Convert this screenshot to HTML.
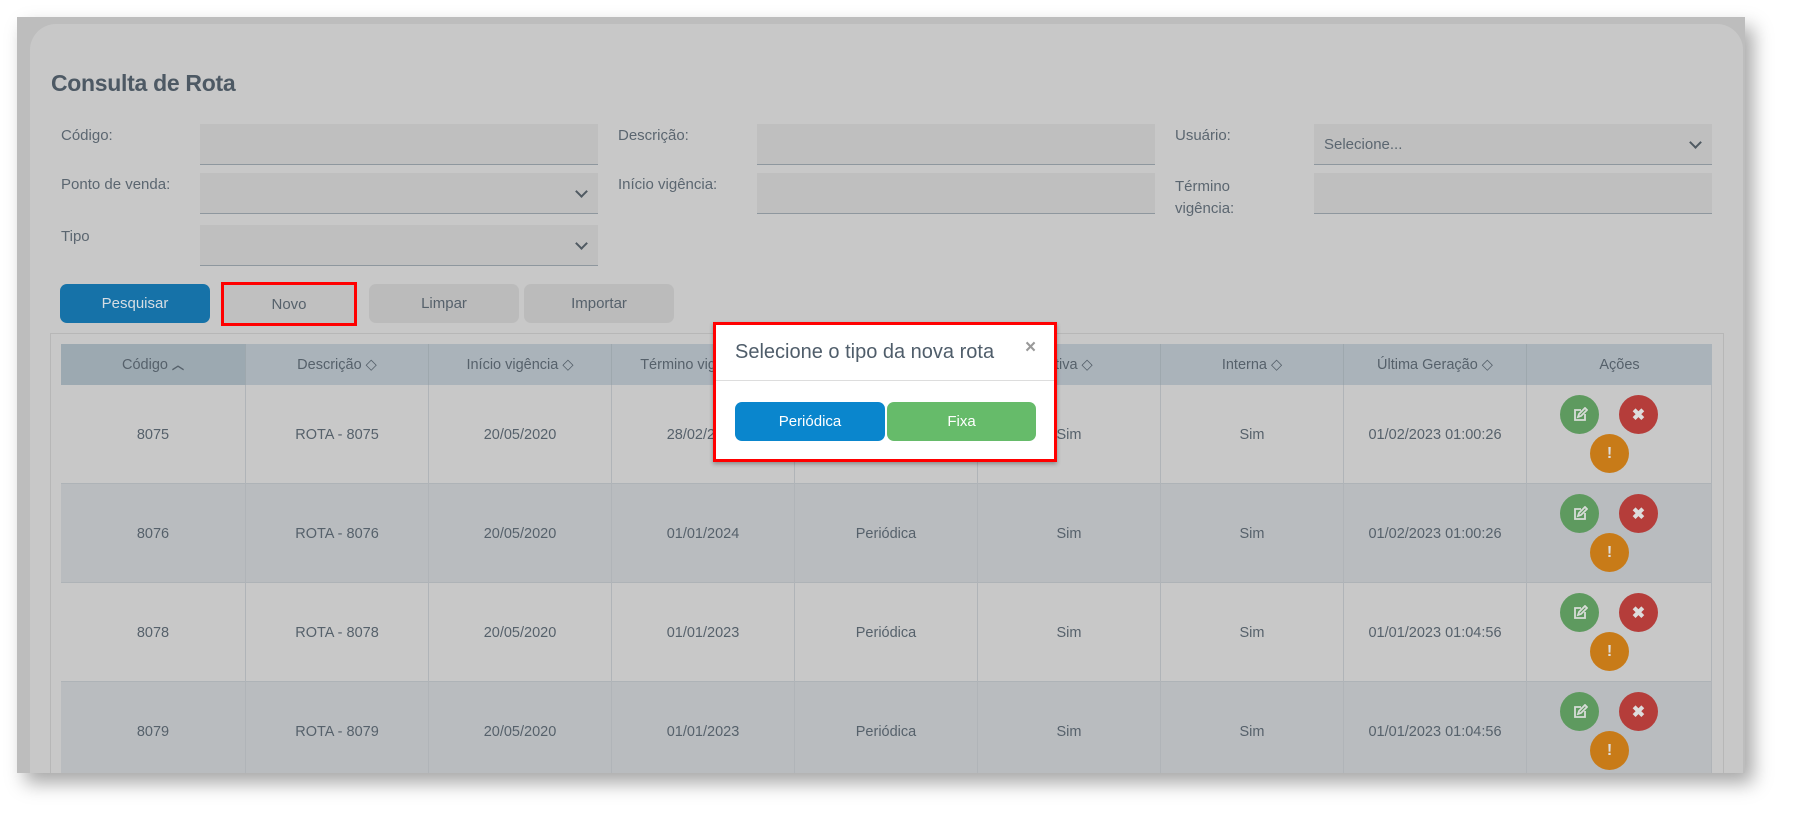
<!DOCTYPE html>
<html><head><meta charset="utf-8"><style>
*{margin:0;padding:0;box-sizing:border-box}
body{width:1800px;height:820px;background:#fff;font-family:"Liberation Sans",sans-serif;position:relative;overflow:hidden;color:#56616b}
.abs{position:absolute}
#outer{left:17px;top:17px;width:1728px;height:756px;background:#bdbdbd;box-shadow:8px 10px 18px rgba(0,0,0,.35)}
#clip{position:absolute;left:0;top:0;width:1800px;height:773px;overflow:hidden}
#card{left:30px;top:24px;width:1713px;height:760px;background:#c8c8c8;border-radius:26px 26px 0 0}
.lbl{font-size:15px;color:#5b6670}
.inp{background:#bfbfbf;border-bottom:1.5px solid #8e979e;height:41px}
.chev{position:absolute;right:12px;top:14px;width:9px;height:9px;border-right:2px solid #505a62;border-bottom:2px solid #505a62;transform:rotate(45deg)}
.btn{height:39px;border-radius:7px;font-size:15px;display:flex;align-items:center;justify-content:center;background:#bbbbbb;color:#56616b}
.th{top:344px;height:41px;background:#aab3ba;font-size:14.5px;display:flex;align-items:center;justify-content:center;border-right:1px solid #9ea8ae}
.cell{font-size:14.5px;display:flex;align-items:center;justify-content:center;border-right:1px solid #b0b4b8}
.c{position:absolute;border-radius:50%;width:39px;height:39px;display:flex;align-items:center;justify-content:center;color:#ddd;font-weight:bold;font-size:16px}
</style></head><body>
<div id="outer" class="abs"></div>
<div id="clip">
<div id="card" class="abs"></div>
<div class="abs" style="left:51px;top:70px;font-size:23px;color:#4d5964;font-weight:bold;letter-spacing:-0.3px">Consulta de Rota</div>

<div class="abs lbl" style="left:61px;top:127px">Código:</div>
<div class="abs inp" style="left:200px;top:124px;width:398px"></div>
<div class="abs lbl" style="left:61px;top:176px">Ponto de venda:</div>
<div class="abs inp" style="left:200px;top:173px;width:398px"><span class="chev"></span></div>
<div class="abs lbl" style="left:61px;top:228px">Tipo</div>
<div class="abs inp" style="left:200px;top:225px;width:398px"><span class="chev"></span></div>

<div class="abs lbl" style="left:618px;top:127px">Descrição:</div>
<div class="abs inp" style="left:757px;top:124px;width:398px"></div>
<div class="abs lbl" style="left:618px;top:176px">Início vigência:</div>
<div class="abs inp" style="left:757px;top:173px;width:398px"></div>

<div class="abs lbl" style="left:1175px;top:127px">Usuário:</div>
<div class="abs inp" style="left:1314px;top:124px;width:398px"><span class="abs lbl" style="left:10px;top:12px">Selecione...</span><span class="chev"></span></div>
<div class="abs lbl" style="left:1175px;top:176px;line-height:22px">Término<br>vigência:</div>
<div class="abs inp" style="left:1314px;top:173px;width:398px"></div>

<div class="abs btn" style="left:60px;top:284px;width:150px;background:#1672a8;color:#d6dde3">Pesquisar</div>
<div class="abs btn" style="left:221px;top:282px;width:136px;height:44px;border:3px solid #f00;border-radius:0;background:#c0c0c0">Novo</div>
<div class="abs btn" style="left:369px;top:284px;width:150px">Limpar</div>
<div class="abs btn" style="left:524px;top:284px;width:150px">Importar</div>

<div class="abs" style="left:50px;top:333px;width:1674px;height:460px;border:1px solid #b7b7b7"></div>

<div class="abs th" style="left:61px;width:185px;background:#9ca9b1">Código&nbsp;<b style="font-size:12px">︿</b></div>
<div class="abs th" style="left:246px;width:183px">Descrição ◇</div>
<div class="abs th" style="left:429px;width:183px">Início vigência ◇</div>
<div class="abs th" style="left:612px;width:183px">Término vigência ◇</div>
<div class="abs th" style="left:795px;width:183px">Tipo ◇</div>
<div class="abs th" style="left:978px;width:183px">Ativa ◇</div>
<div class="abs th" style="left:1161px;width:183px">Interna ◇</div>
<div class="abs th" style="left:1344px;width:183px">Última Geração ◇</div>
<div class="abs th" style="left:1527px;width:185px;border-right:none">Ações</div>

<div id="rows"></div>
<script>
var data=[["8075","ROTA - 8075","20/05/2020","28/02/2024","Periódica","Sim","Sim","01/02/2023 01:00:26"],
["8076","ROTA - 8076","20/05/2020","01/01/2024","Periódica","Sim","Sim","01/02/2023 01:00:26"],
["8078","ROTA - 8078","20/05/2020","01/01/2023","Periódica","Sim","Sim","01/01/2023 01:04:56"],
["8079","ROTA - 8079","20/05/2020","01/01/2023","Periódica","Sim","Sim","01/01/2023 01:04:56"]];
var xs=[61,246,429,612,795,978,1161,1344,1527,1712],h='';
data.forEach(function(r,i){var y=385+i*99,bg=i%2?'#b9bcbf':'#c8c8c8';
h+='<div class="abs" style="left:61px;top:'+y+'px;width:1651px;height:99px;background:'+bg+';border-bottom:1px solid #aeb3b7"></div>';
for(var j=0;j<9;j++){h+='<div class="abs cell" style="left:'+xs[j]+'px;top:'+y+'px;width:'+(xs[j+1]-xs[j])+'px;height:99px">'+(j<8?r[j]:'')+'</div>';}
h+='<div class="c" style="left:1560px;top:'+(y+10)+'px;background:#5e9a5f"><svg width="16" height="16" viewBox="0 0 16 16" fill="none" stroke="#d8dcd8" stroke-width="1.8"><path d="M9 3H3v10h10V7"/><path d="M6 10l1-3 6-6 2 2-6 6z"/></svg></div>';
h+='<div class="c" style="left:1619px;top:'+(y+10)+'px;background:#b53d3a">✖</div>';
h+='<div class="c" style="left:1590px;top:'+(y+49)+'px;background:#c87b18">!</div>';});
document.getElementById('rows').innerHTML=h;
</script>
</div>

<div class="abs" style="left:713px;top:322px;width:344px;height:140px;background:#fff;border:3px solid #f00;box-shadow:0 2px 4px rgba(0,0,0,.3)"></div>
<div class="abs" style="left:735px;top:341px;font-size:20px;color:#4f5d6a">Selecione o tipo da nova rota</div>
<div class="abs" style="left:1025px;top:337px;font-size:19px;color:#999;font-weight:bold">×</div>
<div class="abs" style="left:716px;top:380px;width:338px;height:1px;background:#ddd"></div>
<div class="abs btn" style="left:735px;top:402px;width:150px;background:#0a86cd;color:#fff">Periódica</div>
<div class="abs btn" style="left:887px;top:402px;width:149px;background:#66bb6a;color:#fff">Fixa</div>
</body></html>
